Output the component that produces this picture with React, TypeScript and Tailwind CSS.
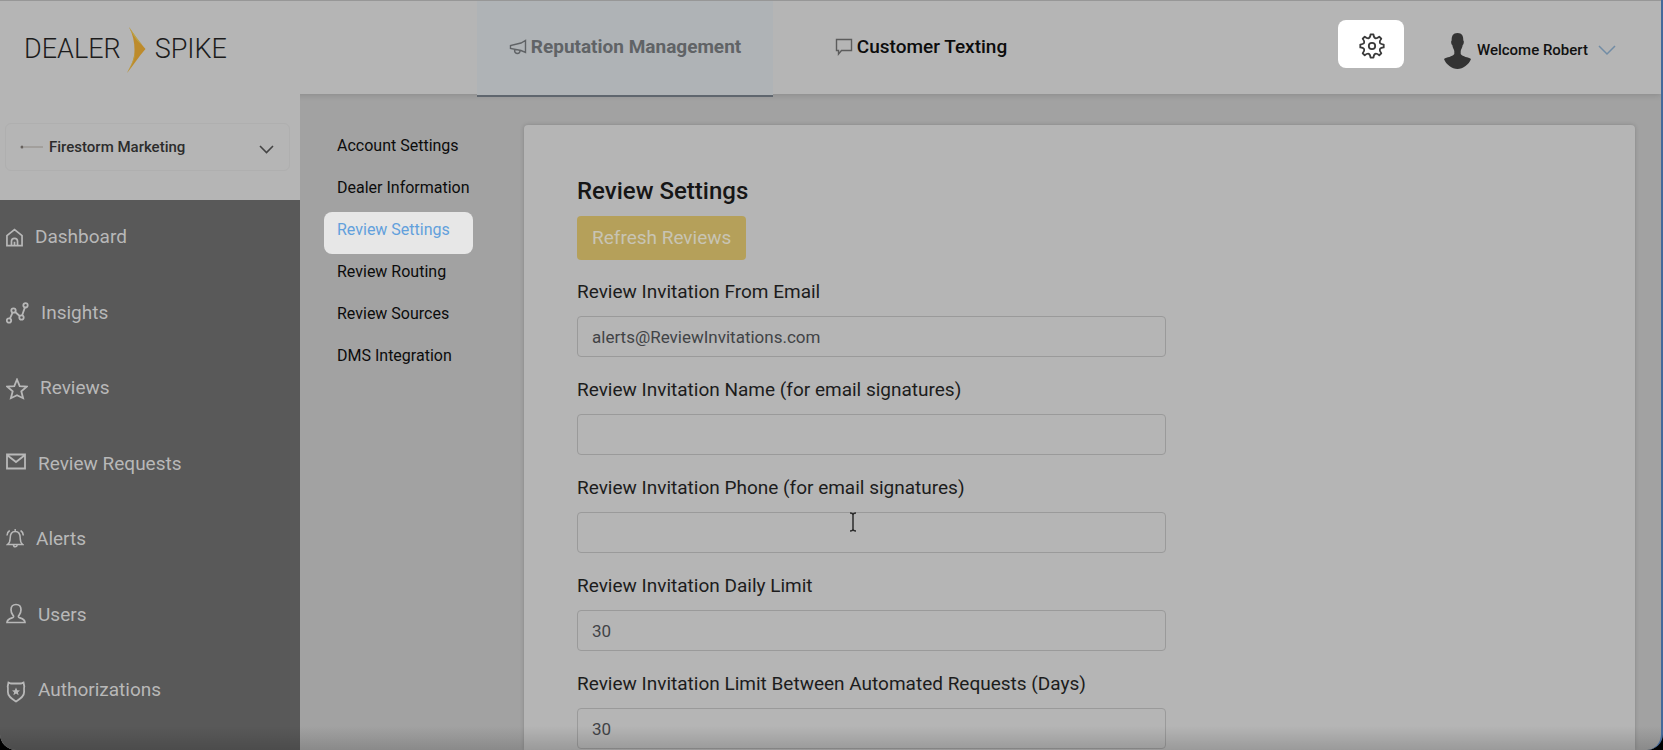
import { useState } from 'react';
import type { ReactNode } from 'react';

type NavItem = {
  label: string;
  icon: ReactNode;
};

const navItems: NavItem[] = [
  {
    label: 'Dashboard',
    icon: (
      <svg width="17" height="20" viewBox="0 0 18 20" fill="none" stroke="currentColor" strokeWidth="1.8">
        <path d="M1 18V7.500L9 1.200l8 6.300V18zM5.800 18v-4.500a3.200 3.200 0 0 1 6.400 0V18M9 14v4" />
      </svg>
    ),
  },
  {
    label: 'Insights',
    icon: (
      <svg width="23" height="22" viewBox="0 0 23 22" fill="none" stroke="currentColor" strokeWidth="1.8">
        <circle cx="3" cy="18.500" r="2.200" />
        <circle cx="7.500" cy="8.500" r="2.200" />
        <circle cx="15.500" cy="15.500" r="2.200" />
        <circle cx="19.500" cy="3.300" r="2.200" />
        <path d="M4 16.400 6.600 10.600M9.200 10l4.500 4M16.200 13.300l2.600-7.700" />
      </svg>
    ),
  },
  {
    label: 'Reviews',
    icon: (
      <svg width="22" height="22" viewBox="0 0 22 22" fill="none" stroke="currentColor" strokeWidth="1.8">
        <path d="m11 1.500 2.700 6.600 7 .5-5.400 4.600 1.800 7-6.100-3-6.100 3 1.800-7L1.300 8.600l7-.5z" />
      </svg>
    ),
  },
  {
    label: 'Review Requests',
    icon: (
      <svg width="20" height="22" viewBox="0 0 20 22" fill="none" stroke="currentColor" strokeWidth="1.8">
        <path d="M1 1.500h18v14H1zM1 2l9 7 9-7" />
      </svg>
    ),
  },
  {
    label: 'Alerts',
    icon: (
      <svg width="18" height="22" viewBox="0 0 18 22" fill="none" stroke="currentColor" strokeWidth="1.5">
        <path d="M1.500 16.500h15.200c-2-1.500-2.500-3-2.500-6.500 0-4-1.500-6.500-5-6.500S4.200 6 4.200 10c0 3.500-.7 5-2.700 6.500zM7.500 17a1.800 1.800 0 0 0 3.600 0M9.200 1v2.500M3.700 2.500C2 3.500 1.200 5 1 7.500M14.600 2.500c1.700 1 2.500 2.500 2.700 5" />
      </svg>
    ),
  },
  {
    label: 'Users',
    icon: (
      <svg width="20" height="24" viewBox="0 0 20 24" fill="none" stroke="currentColor" strokeWidth="1.7">
        <path d="M1 19.500c0-3.500 3-4 6-5 1-.5.600-1.500 0-2.200C5.800 11 5 9 5 6.800 5 3.500 7 1.500 10 1.500s5 2 5 5.300c0 2.200-.8 4.200-2 5.500-.6.700-1 1.700 0 2.200 3 1 6 1.500 6 5z" />
      </svg>
    ),
  },
  {
    label: 'Authorizations',
    icon: (
      <svg className="mt-1" width="20" height="22" viewBox="0 0 20 22" fill="none" stroke="currentColor" strokeWidth="1.8">
        <path d="M2.500 1.500 5 2.500h10l2.500-1 .8 4c-.4 1-.4 2-.2 5.500.2 4.500-4 7-8.100 9.500C5.900 18 1.700 15.500 1.900 11 2.100 7.500 2.100 6.500 1.700 5.500z" />
        <path d="m10 6.500 1.200 2.700 2.800.2-2.100 1.900.7 2.900-2.600-1.600-2.600 1.600.7-2.900L6 9.400l2.800-.2z" fill="currentColor" stroke="none" />
      </svg>
    ),
  },
];

const settingsLinks = [
  'Account Settings',
  'Dealer Information',
  'Review Settings',
  'Review Routing',
  'Review Sources',
  'DMS Integration',
];

const fields = [
  { id: 'from-email', label: 'Review Invitation From Email', value: 'alerts@ReviewInvitations.com' },
  { id: 'name', label: 'Review Invitation Name (for email signatures)', value: '' },
  { id: 'phone', label: 'Review Invitation Phone (for email signatures)', value: '' },
  { id: 'daily-limit', label: 'Review Invitation Daily Limit', value: '30' },
  { id: 'days-between', label: 'Review Invitation Limit Between Automated Requests (Days)', value: '30' },
];

function Logo() {
  return (
    <a href="#" className="flex w-[477px] shrink-0 items-center pt-1 pl-6 text-[27px] text-[#1c1c1c]">
      <span className="font-light">DEALER</span>
      <svg className="mr-2 ml-[6px]" width="20" height="46" viewBox="0 0 20 46">
        <path d="M2 0c5 7 10 15 16.500 22C12 29 6 39 0 46c5-9 7.500-15 7.500-23S6 8 2 0z" fill="#bd8b2c" />
        <path d="M2 0c5 7 9 13 13 17.500C10 15 6 8 2 0zM0 46c5-9 7.500-15 7.500-20 1.500 3-2 12-7.500 20z" fill="#bba54a" />
      </svg>
      <span className="font-light">SPIKE</span>
    </a>
  );
}

function polar(degrees: number, radius: number) {
  const angle = (degrees * Math.PI) / 180;
  return `${(13 + radius * Math.cos(angle)).toFixed(2)} ${(13 + radius * Math.sin(angle)).toFixed(2)}`;
}

// eight teeth with a hollow between each pair
const gearPath =
  `M${polar(-7, 11.8)}` +
  [0, 45, 90, 135, 180, 225, 270, 315]
    .map((a) => `L${polar(a + 7, 11.8)}Q${polar(a + 22.5, 5.6)} ${polar(a + 38, 11.8)}`)
    .join('') +
  'Z';

function Header() {
  return (
    <header className="relative z-10 flex h-[94px] border-t border-[#979797] bg-[#b5b5b5] shadow-[0_1px_6px_rgba(0,0,0,0.15)]">
      <Logo />
      <nav className="flex h-24 shrink-0 text-[19px] font-medium">
        <a
          href="#"
          className="flex w-[296px] items-center justify-center gap-1 border-b-2 border-[#5f666e] bg-[#afb3b6] pb-[2px] font-bold text-[#606366]"
        >
          <svg width="18" height="16" viewBox="0 0 18 16" fill="none" stroke="currentColor" strokeWidth="1.4">
            <path d="M16.500 1.500v12L12 11.500 1.500 9.500v-3L12 4zM5.500 10.500c0 3 1 4 3 4s2.500-1 2.700-3" />
          </svg>
          Reputation Management
        </a>
        <a href="#" className="flex w-[296px] items-center justify-center gap-1 border-b-2 border-transparent pb-[2px] text-[#0c0c0c]">
          <svg width="18" height="18" viewBox="0 0 18 18" fill="none" stroke="#5c5c5c" strokeWidth="1.4">
            <path d="M1.500 1.500h15v11h-10L3.500 16v-3.500h-2z" />
          </svg>
          Customer Texting
        </a>
      </nav>
      <div className="ml-auto flex pr-[45px]">
        <button
          aria-label="Settings"
          className="mt-[19px] mr-10 flex h-12 w-[66px] items-center justify-center rounded-lg bg-white pt-1 pl-[2px] text-[#3a3a3a]"
        >
          <svg width="26" height="26" viewBox="0 0 26 26" fill="none" stroke="currentColor" strokeWidth="1.800" strokeLinejoin="round">
            <path d={gearPath} />
            <circle cx="13" cy="13" r="3.200" />
          </svg>
        </button>
        <button className="flex items-center gap-[6px] pt-[6px] text-[15px] font-medium text-[#111]">
          <svg width="27" height="38" viewBox="0 0 27 38" fill="#333">
            <path d="M13.500 1c4.500 0 6 3 5.800 7.500 1 .5.500 4-.600 4.500-.4 3-1.700 4.500-2 6v3c2 3 7.500 3 10.300 5-2 5.500-8 10-13.500 10S2 32.500 0 27c2.800-2 8.300-2 10.300-5v-3c-.3-1.500-1.600-3-2-6-1.100-.5-1.600-4-.6-4.500C7.500 4 9 1 13.500 1z" />
          </svg>
          Welcome Robert
          <svg className="ml-1" width="18" height="11" viewBox="0 0 18 11" fill="none" stroke="#718ca5" strokeWidth="1.500">
            <path d="m1 1 8 8 8-8" />
          </svg>
        </button>
      </div>
    </header>
  );
}

function Sidebar() {
  return (
    <aside className="relative z-20 flex w-[300px] shrink-0 flex-col bg-[#595959]">
      <div className="bg-[#b5b5b5] px-[5px] pt-[29px] pb-[29px]">
        <div className="relative">
          <select
            aria-label="Dealer"
            className="h-12 w-[285px] appearance-none rounded-md border border-[#afafaf] bg-transparent pl-[43px] text-[15px] font-medium text-[#2c2c2c]"
          >
            <option>Firestorm Marketing</option>
          </select>
          <svg className="pointer-events-none absolute top-[21px] left-[15px]" width="24" height="6" viewBox="0 0 24 6">
            <circle cx="2" cy="3" r="1.500" fill="#66605c" />
            <path d="M4 3h19" stroke="#9c9894" strokeWidth="1.500" />
          </svg>
          <svg
            className="pointer-events-none absolute top-[22px] left-[254px]"
            width="15"
            height="9"
            viewBox="0 0 15 9"
            fill="none"
            stroke="#444"
            strokeWidth="1.600"
          >
            <path d="m1 1 6.500 6.500L14 1" />
          </svg>
        </div>
      </div>
      <nav className="flex grow flex-col pb-[22px]">
        {navItems.map((item) => (
          <a
            key={item.label}
            href="#"
            className="flex flex-1 items-center gap-3 pl-[6px] text-[19px] text-[#b8b8b8]"
          >
            {item.icon}
            {item.label}
          </a>
        ))}
      </nav>
    </aside>
  );
}

function SettingsMenu() {
  return (
    <nav className="w-[224px] shrink-0 pt-[34px] pl-6 text-[16px]">
      {settingsLinks.map((label) => (
        <a
          key={label}
          href="#"
          className={
            label === 'Review Settings'
              ? 'flex h-[42px] w-[149px] items-center rounded-lg bg-[#e7e7e7] pb-[6px] pl-[13px] text-[#62a0dc]'
              : 'flex h-[42px] items-center pb-[6px] pl-[13px] text-[#0c0c0c]'
          }
        >
          {label}
        </a>
      ))}
    </nav>
  );
}

function SettingsForm() {
  const [values, setValues] = useState<Record<string, string>>(
    Object.fromEntries(fields.map((field) => [field.id, field.value]))
  );

  return (
    <main className="mt-[31px] mr-[26px] grow rounded-t bg-[#b5b5b5] px-[53px] pt-[50px] shadow-[0_0_4px_rgba(0,0,0,0.18)]">
      <h1 className="text-2xl font-medium text-[#161616]">Review Settings</h1>
      <button className="mt-[9px] h-11 rounded bg-[#b5a05a] px-[15px] text-[19px] text-[#c8c4b4]">
        Refresh Reviews
      </button>

      <form className="mt-[18px] flex max-w-[589px] flex-col gap-[19px]">
        {fields.map((field) => (
          <div key={field.id}>
            <label htmlFor={field.id} className="block text-[19px] leading-7 text-[#1c1c1c]">
              {field.label}
            </label>
            <div className="relative mt-[10px]">
              <input
                id={field.id}
                type="text"
                value={values[field.id]}
                onChange={(e) =>
                  setValues({ ...values, [field.id]: e.target.value })
                }
                className="block h-[41px] w-full rounded border border-[#9a9a9a] px-[14px] text-[17px] text-[#414346]"
              />
              {field.id === 'phone' && (
                <svg
                  className="pointer-events-none absolute top-0 left-[272px]"
                  width="8"
                  height="20"
                  viewBox="0 0 8 20"
                  fill="none"
                  stroke="#2c2c2c"
                  strokeWidth="1.500"
                >
                  <path d="M1 1q3 0 3 2 0-2 3-2M1 19q3 0 3-2 0 2 3 2M4 3v14" />
                </svg>
              )}
            </div>
          </div>
        ))}
      </form>
    </main>
  );
}

export default function App() {
  return (
    <div className="bg-black font-['Roboto',sans-serif]">
      <div className="relative flex min-h-screen flex-col overflow-hidden rounded-b-2xl border-r-2 border-[#44699a] bg-[#a2a2a2]">
        <Header />
        <div className="flex grow">
          <Sidebar />
          <SettingsMenu />
          <SettingsForm />
        </div>
        {/* fade along the bottom edge of the window */}
        <div className="pointer-events-none absolute inset-x-0 bottom-0 z-30 h-6 bg-linear-to-b from-transparent to-black/15" />
      </div>
    </div>
  );
}
